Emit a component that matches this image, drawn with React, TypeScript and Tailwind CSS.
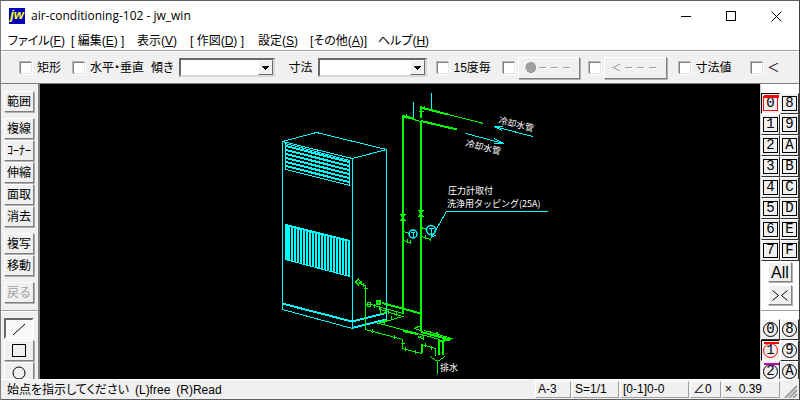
import { useState, type ReactNode } from "react"
import clsx from "clsx"

const raised =
  "border border-t-white border-l-white border-r-[#808080] border-b-[#808080] bg-[#f0f0f0] shadow-[1px_1px_0_#b0b0b0]"

const menus = [
  { label: "ファイル", accessKey: "F", className: "w-[63px]" },
  { label: "[ 編集", accessKey: "E", end: " ]", className: "w-[66px]" },
  { label: "表示", accessKey: "V", className: "w-[53px]" },
  { label: "[ 作図", accessKey: "D", end: " ]", className: "w-[68px]" },
  { label: "設定", accessKey: "S", className: "w-[52px]" },
  { label: "[その他", accessKey: "A", end: "]", className: "w-[68px]" },
  { label: "ヘルプ", accessKey: "H", className: "w-[60px]" },
]

const toolGroups = [
  ["範囲"],
  ["複線", "ｺｰﾅｰ", "伸縮", "面取", "消去"],
  ["複写", "移動"],
]

const layers = ["0", "8", "1", "9", "2", "A", "3", "B", "4", "C", "5", "D", "6", "E", "7", "F"]
const layerGroups = layers.slice(0, 6)

function TitleBar() {
  return (
    <header className="flex h-[30px] shrink-0 items-center bg-white">
      <svg viewBox="0 0 16 16" className="ml-2 size-4" aria-hidden="true">
        <rect width="16" height="16" fill="#0000b8" />
        <text
          x="8"
          y="11"
          textAnchor="middle"
          fill="#ffff20"
          fontSize="13"
          fontWeight="bold"
          fontStyle="italic"
          fontFamily="Liberation Sans, sans-serif"
        >
          jw
        </text>
      </svg>
      <h1 className="ml-[6px] font-['Open_Sans',sans-serif] text-[12px]">air-conditioning-102 - jw_win</h1>
      <div className="ml-auto flex h-full">
        <button aria-label="Minimize" className="flex w-[45px] items-center justify-center">
          <svg width="11" height="11" className="stroke-black" shapeRendering="crispEdges">
            <path d="M0 5.5h10" />
          </svg>
        </button>
        <button aria-label="Maximize" className="flex w-[45px] items-center justify-center">
          <svg width="11" height="11" fill="none" className="stroke-black" shapeRendering="crispEdges">
            <rect x="0.5" y="0.5" width="9" height="9" />
          </svg>
        </button>
        <button aria-label="Close" className="flex w-[45px] items-center justify-center">
          <svg width="11" height="11" className="stroke-black">
            <path d="M0.5 0.5l10 10M10.5 0.5l-10 10" />
          </svg>
        </button>
      </div>
    </header>
  )
}

function MenuBar() {
  return (
    <nav className="flex h-[20px] shrink-0 items-center border-b border-[#a0a0a0] bg-white pl-[7px] text-[12px]">
      {menus.map((menu) => (
        <button
          key={menu.accessKey}
          className={clsx("shrink-0 text-left leading-[18px] whitespace-pre [font-feature-settings:'palt']", menu.className)}
        >
          {menu.label}(<u>{menu.accessKey}</u>){menu.end}
        </button>
      ))}
    </nav>
  )
}

function Check({ label, className, bare }: { label: string; className?: string; bare?: boolean }) {
  return (
    <label className={clsx("flex shrink-0 items-center whitespace-nowrap", className)}>
      <input
        type="checkbox"
        aria-label={bare ? label : undefined}
        className="mr-[5px] size-3 shrink-0 appearance-none border border-t-[#808080] border-r-[#e3e3e3] border-b-[#e3e3e3] border-l-[#808080] bg-white shadow-[1px_1px_0_#fff,-1px_-1px_0_#b8b8b8] checked:bg-[#404040]"
      />
      {!bare && <span className="[font-feature-settings:'palt']">{label}</span>}
    </label>
  )
}

function Combo({ label, className }: { label: string; className: string }) {
  return (
    <label className="flex shrink-0 items-center gap-[5px]">
      <span className="[font-feature-settings:'palt']">{label}</span>
      <span className={clsx("relative block h-[19px]", className)}>
        <select className="size-full appearance-none border-2 border-t-[#696969] border-r-[#d8d8d8] border-b-[#d8d8d8] border-l-[#696969] bg-white">
          <option></option>
        </select>
        <span
          className={clsx(
            "pointer-events-none absolute top-[2px] right-[2px] bottom-[2px] flex w-[15px] items-center justify-center",
            "border border-t-white border-r-[#696969] border-b-[#696969] border-l-white bg-[#f0f0f0]"
          )}
        >
          <svg width="7" height="4" shapeRendering="crispEdges" aria-hidden="true">
            <path d="M0 0h7L3.5 4z" />
          </svg>
        </span>
      </span>
    </label>
  )
}

function ToolBar() {
  return (
    <div className="flex h-[33px] shrink-0 items-center border-t border-b border-t-white border-b-[#808080] bg-[#f0f0f0] pl-[19px] text-[12px]">
      <Check label="矩形" className="w-[53px]" />
      <Check label="水平・垂直" className="w-[78px]" />
      <Combo label="傾き" className="w-[96px]" />
      <div className="w-[14px] shrink-0" />
      <Combo label="寸法" className="w-[109px]" />
      <Check label="15度毎" className="ml-[10px] w-[66px]" />
      <Check label="点付線" bare className="w-[15px]" />
      <button
        aria-label="点付線の形状"
        className={clsx(raised, "flex h-[22px] w-[62px] shrink-0 items-center justify-center")}
      >
        <svg width="50" height="14" fill="none" stroke="#a0a0a0" shapeRendering="crispEdges">
          <circle cx="7" cy="6.5" r="5.5" fill="#a0a0a0" stroke="none" />
          <path d="M15 6.5h7M27 6.5h7M39 6.5h7" />
          <path d="M16 7.5h7M28 7.5h7M40 7.5h7" stroke="#fff" />
        </svg>
      </button>
      <Check label="矢印付線" bare className="ml-[9px] w-[15px]" />
      <button
        aria-label="矢印の形状"
        className={clsx(raised, "flex h-[22px] w-[63px] shrink-0 items-center justify-center")}
      >
        <svg width="50" height="14" fill="none" stroke="#a0a0a0" shapeRendering="crispEdges">
          <path d="M10 3L3 6.5L10 10" />
          <path d="M15 6.5h7M27 6.5h7M39 6.5h7" />
          <path d="M16 7.5h7M28 7.5h7M40 7.5h7" stroke="#fff" />
        </svg>
      </button>
      <Check label="寸法値" className="ml-[12px] w-[72px]" />
      <Check label="＜" className="w-[40px]" />
    </div>
  )
}

function ToolButton({ children, disabled, label }: { children: ReactNode; disabled?: boolean; label?: string }) {
  return (
    <button
      disabled={disabled}
      aria-label={label}
      className={clsx(
        raised,
        "mb-px flex h-[21px] w-[30px] shrink-0 items-center justify-center text-[12px] whitespace-nowrap disabled:text-[#a0a0a0]"
      )}
    >
      {children}
    </button>
  )
}

function LeftTools() {
  return (
    <aside className="flex w-[39px] shrink-0 flex-col overflow-hidden border-r-2 border-[#808080] bg-[#f0f0f0] pt-[7px]">
      {toolGroups.map((group) => (
        <div key={group[0]} className="mb-[5px] flex flex-col pl-[3px]">
          {group.map((name) => (
            <ToolButton key={name}>{name}</ToolButton>
          ))}
        </div>
      ))}
      <div className="mb-[6px] pl-[3px]">
        <ToolButton disabled>戻る</ToolButton>
      </div>
      <div className="mb-[6px] h-[2px] shrink-0 border-t border-b border-t-[#a0a0a0] border-b-white" />
      <div className="flex flex-col pl-[3px]">
        <button
          aria-label="線"
          aria-pressed="true"
          className="mb-px flex h-[21px] w-[30px] shrink-0 items-center justify-center border-2 border-t-[#696969] border-r-white border-b-white border-l-[#696969] bg-[#f8f8f8]"
        >
          <svg width="14" height="14" stroke="#000">
            <path d="M1 13L13 2" />
          </svg>
        </button>
        <ToolButton label="矩形">
          <svg width="14" height="13" fill="none" stroke="#000" shapeRendering="crispEdges">
            <rect x="0.5" y="0.5" width="13" height="12" />
          </svg>
        </ToolButton>
        <ToolButton label="円">
          <svg width="14" height="14" fill="none" stroke="#000">
            <circle cx="7" cy="7" r="6" />
          </svg>
        </ToolButton>
      </div>
    </aside>
  )
}

function Drawing() {
  const bars = Array.from({ length: 22 }, (_, i) => i * 3)
  const slats = [2, 6, 10, 14, 18, 22]

  return (
    <main className="min-w-0 flex-1 bg-black">
      <svg
        viewBox="40 84 720 295"
        preserveAspectRatio="xMinYMin meet"
        className="block size-full"
        fill="none"
        stroke="#00ffff"
        shapeRendering="crispEdges"
      >
        {/* cabinet */}
        <path d="M282.5 141.5L316.5 132.5L386.5 149.5L352.5 158.5L282.5 141.5V309.5L352.5 328.5V158.5M386.5 149.5V319.5" />
        <path d="M282 303.5L352 321.5L386 313M352 328L386 319.5" strokeWidth="2" />

        {/* upper louvre */}
        <path d="M285.5 143.5L349.5 160.5V185.5L285.5 169.5Z" />
        {slats.map((y) => (
          <path key={y} d={`M286 ${144 + y}L349 ${160 + y}`} strokeWidth="2" />
        ))}

        {/* lower grille */}
        <path d="M285.5 224.5L349.5 240.5V276.5L285.5 259.5Z" />
        <path d="M285 225L350 241M287 225V260" strokeWidth="2" />
        {bars.map((x) => (
          <path key={x} d={`M${286 + x} ${224 + Math.round(x / 4)}v36`} strokeWidth="2" />
        ))}

        {/* riser pipes */}
        <g stroke="#00ff00">
          <path d="M403 115V314M421 106V118M421 122V331" strokeWidth="2" />
          <path d="M402.5 116.5L421 121.5M421 107.5L483.5 123.5" />
          <path d="M421 121L457 129.5" strokeWidth="2" />
          <path d="M421 107.5L448 114.5M403 116L414 118.5" strokeWidth="2" />
          <path d="M406.5 114v5M424.5 106v4M418.5 111.5h5" />
          <path d="M400.5 214.5h5l-5 6h5zM418.5 210.5h5l-5 6h5z" />
          <path d="M403 231.5L410 233.5M403 240.5L410 242.5M410.5 239.5v4M421 227.5L427 229.5M421 236.5L431 239.5M430.5 237.5v3" />
          <path d="M407.5 239v4M425.5 235v4" />
        </g>

        {/* floor piping */}
        <g stroke="#00ff00">
          <path d="M355.5 282l3 -3l2 3l-2 3zM358.5 282.5L365.5 285.5V329.5L402.5 339.5V348.5L421.5 353.5V344.5L435.5 348.5V356" />
          <path d="M361.5 281v4M363.5 283v4M363.5 288.5h4M372.5 329v4M394.5 335v4M400.5 343.5h4M405.5 347v4M415.5 350v4M425.5 343v4M431.5 346v4" />
          <path d="M365 304.5L371 304.5L403 313.5M367.5 302.5h3v4h-3zM374.5 304v4M379.5 306v4" />
          <path d="M382 303L421 313.5M377 300.5h3v3h-3z" strokeWidth="2" />
          <path d="M380 309.5L402.5 316.5L379 323.5L410 331.5L440 339.5M380.5 308v5h5v-4M388.5 309v5M396.5 312v4M391.5 316v4M384.5 320v4" />
          <path d="M379 323L387 321M403 331L418 334M421 332L450 339.5L440 341" strokeWidth="2" />
          <path d="M414 328.5l7 -3v5l-7 -2M418.5 336.5l5 3v-4l-5 2M424.5 330.5L452 338.5L444 341.5M430.5 331v5M434.5 333.5l3 -1v4h-3z" />
          <path d="M421.5 344V353" strokeWidth="2" />
          <path d="M439 340V355M442.5 341V355" strokeWidth="2" />
          <path d="M430 356.5L437.5 361.5L445 356.5M437.5 361V374" />
        </g>

        {/* gauges, flow arrows and leader line */}
        <path d="M413.5 102V117M431.5 93V109" />
        <path d="M466 133.5L503.5 143.5M494 138.5L503.5 143.5L494 143.5M533 136.5L494 126.5M503 126.5L494 126.5L502 130.5" />
        <g shapeRendering="auto" strokeWidth="1.5">
          <circle cx="413" cy="234" r="4" />
          <circle cx="431" cy="230" r="4.5" />
        </g>
        <path d="M411 232.5h4M413.5 232v5M429 228.5h5M431.5 228v6" />
        <path d="M548 211.5H446.5L431.5 237.5M431.5 237.5v-6M431.5 237.5l5 -3" />

        <g fill="#fff" stroke="none" fontSize="9" fontFamily="'Noto Sans CJK JP', sans-serif">
          <text transform="translate(498 123) rotate(14)">冷却水管</text>
          <text transform="translate(465 146) rotate(14)">冷却水管</text>
          <text x="448" y="194">圧力計取付</text>
          <text x="447" y="207">洗浄用タッピング(25A)</text>
          <text x="440" y="371">排水</text>
        </g>
      </svg>
    </main>
  )
}

function LayerGrid({ names, round, initial }: { names: string[]; round?: boolean; initial: string }) {
  const [active, setActive] = useState(initial)

  return (
    <div className="grid shrink-0 grid-cols-2">
      {names.map((name) => {
        const current = name === active
        return (
          <button
            key={name}
            aria-pressed={current}
            onClick={() => setActive(name)}
            className={clsx(
              "relative flex h-[21px] items-center justify-center border bg-[#f0f0f0]",
              current
                ? "border-t-black border-r-white border-b-white border-l-black"
                : "border-t-white border-r-[#303030] border-b-[#303030] border-l-white"
            )}
          >
            {(current || (round && name === "2")) && (
              <i
                className={clsx(
                  "absolute top-px left-[2px] w-[15px]",
                  round ? "h-[2px]" : "h-[3px]",
                  current ? "bg-[#ff0000]" : "bg-[#c000c0]"
                )}
              />
            )}
            <span
              className={clsx(
                "flex size-[15px] items-center justify-center border font-['Liberation_Mono',monospace] text-[14px] leading-[13px]",
                round && "rounded-full",
                current ? "border-[#ff0000]" : "border-black"
              )}
            >
              {name}
            </span>
          </button>
        )
      })}
    </div>
  )
}

function RightTools() {
  return (
    <aside className="flex w-[39px] shrink-0 flex-col overflow-hidden border-l border-[#d0d0d0] bg-white pt-[9px]">
      <LayerGrid names={layers} initial="0" />
      <div className="mt-px flex shrink-0 flex-col items-center gap-[3px]">
        <button className={clsx(raised, "h-[20px] w-[24px] font-['Liberation_Sans',sans-serif] text-[16px] leading-[17px]")}>
          All
        </button>
        <button aria-label="グループ切替" className={clsx(raised, "flex h-[20px] w-[24px] items-center justify-center")}>
          <svg width="16" height="11" fill="none" stroke="#000">
            <path d="M0.5 0.5l6 5l-6 5M15.5 0.5l-6 5l6 5" />
          </svg>
        </button>
      </div>
      <div className="mt-[5px] mb-[8px] h-px shrink-0 bg-[#a0a0a0]" />
      <LayerGrid names={layerGroups} round initial="1" />
    </aside>
  )
}

function Pane({ children, className }: { children: ReactNode; className: string }) {
  return (
    <button
      className={clsx(
        "h-[17px] shrink-0 border border-t-white border-r-[#a0a0a0] border-b-[#a0a0a0] border-l-white pl-[2px] text-left leading-[15px] whitespace-pre",
        className
      )}
    >
      {children}
    </button>
  )
}

function StatusBar() {
  return (
    <footer className="flex h-[21px] shrink-0 items-center gap-px border-t border-b border-t-white border-b-[#606060] bg-[#f0f0f0] text-[12px]">
      <p className="min-w-0 flex-1 truncate pl-[6px] leading-[18px] [font-feature-settings:'palt']">
        始点を指示してください&ensp;(L)free&ensp;(R)Read
      </p>
      <Pane className="w-[36px]">A-3</Pane>
      <Pane className="w-[47px]">S=1/1</Pane>
      <Pane className="w-[69px]">[0-1]0-0</Pane>
      <Pane className="w-[31px]">∠0</Pane>
      <Pane className="w-[58px]">{"×  0.39"}</Pane>
      <svg width="18" height="17" stroke="#a0a0a0" className="shrink-0" aria-hidden="true">
        <path d="M4 17L16 5M8 17L16 9M12 17L16 13" strokeWidth="2" />
      </svg>
    </footer>
  )
}

export default function App() {
  return (
    <div className="flex h-screen flex-col overflow-hidden border-t border-r border-l border-t-[#606060] border-r-[#404040] border-l-[#808080] bg-[#f0f0f0] font-['Liberation_Sans','Noto_Sans_CJK_JP',sans-serif] text-black">
      <TitleBar />
      <MenuBar />
      <ToolBar />
      <div className="flex min-h-0 flex-1">
        <LeftTools />
        <Drawing />
        <RightTools />
      </div>
      <StatusBar />
    </div>
  )
}
